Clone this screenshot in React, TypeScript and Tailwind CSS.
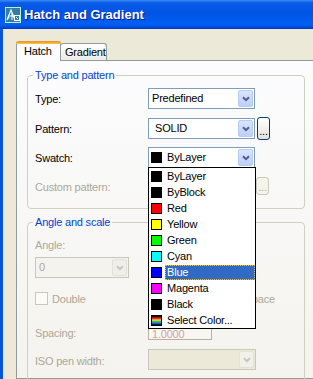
import React from 'react';

const FONT = "font-['Liberation_Sans',Arial,sans-serif]";

// little "v" arrow of an XP combo box
const Chevron = ({ color }: { color: string }) => (
  <svg width="8" height="6" viewBox="0 0 8 6" className="block">
    <path d="M1 1.2 L4 4.2 L7 1.2" fill="none" stroke={color} strokeWidth="2" />
  </svg>
);

const Combo = ({
  children,
  width,
  disabled = false,
}: {
  children?: React.ReactNode;
  width: string;
  disabled?: boolean;
}) => (
  <div
    className={`${width} h-[21px] shrink-0 flex items-center border ${
      disabled ? 'border-[#C9C7BA] bg-[#F4F3EE]' : 'border-[#7F9DB9] bg-white'
    }`}
  >
    <div className="flex-1 flex items-center min-w-0 overflow-hidden">{children}</div>
    <div
      className={`w-[15px] h-[17px] mr-[1px] flex items-center justify-center rounded-[2px] border ${
        disabled
          ? 'border-[#E3E1D8] bg-[#EFEEE8]'
          : 'border-[#B8CAF4] bg-[linear-gradient(to_bottom,#D9E4FE,#BCCFFA)]'
      }`}
    >
      <Chevron color={disabled ? '#C9C7BA' : '#4D6185'} />
    </div>
  </div>
);

const Swatch = ({ color }: { color: string }) => (
  <span className="w-[11px] h-[11px] border border-black shrink-0" style={{ background: color }} />
);

const HatchIcon = () => (
  <svg width="16" height="16" viewBox="0 0 16 16" className="block">
    <rect x="0.5" y="0.5" width="15" height="15" fill="#2F7FA6" stroke="#BFF0C8" />
    <path d="M2 13 L6 3 L10 13" fill="none" stroke="#fff" strokeWidth="1.2" />
    <path d="M3.6 9 H8.4 M7 6 V13 M4.5 11 H2.5" fill="none" stroke="#fff" strokeWidth="1" />
    <rect x="9.5" y="8.5" width="5" height="5" fill="#2F7FA6" stroke="#fff" />
    <path d="M11 10 L13 12" stroke="#fff" strokeWidth="1" />
  </svg>
);

const colors: { name: string; color: string }[] = [
  { name: 'ByLayer', color: '#000000' },
  { name: 'ByBlock', color: '#000000' },
  { name: 'Red', color: '#FF0000' },
  { name: 'Yellow', color: '#FFFF00' },
  { name: 'Green', color: '#00FF00' },
  { name: 'Cyan', color: '#00FFFF' },
  { name: 'Blue', color: '#0000FF' },
  { name: 'Magenta', color: '#FF00FF' },
  { name: 'Black', color: '#000000' },
  {
    name: 'Select Color...',
    color:
      'linear-gradient(to bottom, #000 0%, #ff3030 30%, #ffe030 45%, #30d040 60%, #3060ff 80%, #000 100%)',
  },
];

export default function App() {
  return (
    <div
      className={`relative w-[313px] h-[379px] overflow-hidden flex flex-col bg-[#ECE9D8] text-[11px] tracking-[-0.2px] text-black ${FONT}`}
    >
      {/* title bar */}
      <div className="h-[29px] shrink-0 flex items-center pl-[5px] gap-[3px] bg-[linear-gradient(to_bottom,#3A8CF6_0%,#0A5AE8_10%,#0054E3_45%,#0060F5_85%,#0048D8_95%,#0036B8_100%)]">
        <HatchIcon />
        <span className="text-white font-bold text-[13px] tracking-normal [text-shadow:1px_1px_#0A1883]">
          Hatch and Gradient
        </span>
      </div>

      <div className="flex-1 min-h-0 flex flex-col border-l-[3px] border-[#0855DD] pl-[13px] pt-[12px]">
        {/* tabs */}
        <div className="shrink-0 flex items-end h-[19px]">
          <div className="relative z-10 -mb-px w-[45px] h-[20px] flex flex-col border-x border-[#919B9C] bg-[#FCFCFE] rounded-t-[3px]">
            <div className="h-[3px] -mx-px rounded-t-[3px] bg-[linear-gradient(to_bottom,#E68B2C,#FFC73C)]" />
            <span className="pl-[7px] pt-[1px] leading-[13px]">Hatch</span>
          </div>
          <div className="w-[47px] h-[17px] -ml-px border border-b-0 border-[#919B9C] rounded-t-[3px] bg-[linear-gradient(to_bottom,#FFFFFF,#ECEBE6)] pl-[4px] pt-[2px] leading-[13px]">
            Gradient
          </div>
        </div>

        {/* tab page */}
        <div className="flex-1 min-h-0 w-[300px] border border-[#919B9C] bg-[linear-gradient(to_bottom,#FCFCFE,#F4F3EE)] pl-[10px]">
          <fieldset className="mt-[8px] w-[278px] border border-[#D0D0BF] rounded-[4px] pl-[7px] pb-[13px]">
            <legend className="-ml-[2px] px-[2px] leading-[13px] text-[#0046D5]">Type and pattern</legend>
            <div className="mt-[6px] h-[21px] flex items-center">
              <span className="w-[113px] pt-[2px]">Type:</span>
              <Combo width="w-[107px]">
                <span className="pl-[3px]">Predefined</span>
              </Combo>
            </div>
            <div className="mt-[9px] h-[21px] flex items-center">
              <span className="w-[113px] pt-[2px]">Pattern:</span>
              <Combo width="w-[107px]">
                <span className="pl-[6px]">SOLID</span>
              </Combo>
              <div className="ml-[2px] w-[13px] h-[23px] border border-[#003C74] rounded-[3px] bg-[linear-gradient(to_bottom,#FFFFFF,#E3E2DA)] flex items-end justify-center leading-[12px] pb-[2px]">
                ...
              </div>
            </div>
            <div className="mt-[8px] h-[21px] flex items-center">
              <span className="w-[113px] pt-[2px]">Swatch:</span>
              <Combo width="w-[107px]">
                <span className="pl-[2px] flex items-center gap-[5px]">
                  <Swatch color="#000" />
                  ByLayer
                </span>
              </Combo>
            </div>
            <div className="mt-[9px] h-[18px] flex items-center">
              <span className="w-[221px] pt-[3px] text-[#ACA899]">Custom pattern:</span>
              <div className="w-[13px] h-[18px] border border-[#CAC8BB] rounded-[3px] bg-[#F5F4EA] flex items-end justify-center leading-[12px] pb-[1px] text-[#ACA899]">
                ...
              </div>
            </div>
          </fieldset>

          <fieldset className="mt-[7px] w-[278px] border border-[#D0D0BF] rounded-[4px] pl-[7px] pb-[20px] text-[#ACA899]">
            <legend className="-ml-[2px] px-[2px] leading-[13px] text-[#0046D5]">Angle and scale</legend>
            <div className="mt-[10px] h-[13px] leading-[13px]">Angle:</div>
            <div className="mt-[5px] h-[21px] flex">
              <Combo width="w-[94px]" disabled>
                <span className="pl-[3px]">0</span>
              </Combo>
            </div>
            <div className="mt-[14px] h-[13px] flex items-center">
              <div className="w-[113px] flex items-center gap-[4px]">
                <span className="w-[13px] h-[13px] border border-[#CAC8BB] bg-[#FBFBF8]" />
                <span className="pt-[1px]">Double</span>
              </div>
              <div className="flex items-center gap-[3px]">
                <span className="w-[13px] h-[13px] border border-[#CAC8BB] bg-[#FBFBF8]" />
                <span className="pt-[1px]">Relative to paper space</span>
              </div>
            </div>
            <div className="mt-[17px] h-[18px] flex items-center">
              <span className="w-[113px] pt-[4px]">Spacing:</span>
              <div className="w-[64px] h-[18px] border border-[#B5B2A5] bg-[#F7F6F1] pl-[3px] pt-[3px] leading-[16px] text-[#D8A0A0] overflow-hidden">1.0000</div>
            </div>
            <div className="mt-[9px] h-[21px] flex items-center">
              <span className="w-[113px] pt-[4px]">ISO pen width:</span>
              <div className="w-[108px] h-[21px] flex items-center border border-[#C9C7BA] bg-[#ECE9D8]">
                <div className="flex-1" />
                <div className="w-[15px] h-[17px] mr-[1px] flex items-center justify-center rounded-[2px] border border-[#E3E1D8] bg-[#F1F0EA]">
                  <Chevron color="#C9C7BA" />
                </div>
              </div>
            </div>
          </fieldset>
        </div>
      </div>

      {/* open color drop-down list */}
      <div className="absolute left-[148px] top-[167px] w-[108px] border border-black bg-white flex flex-col">
        {colors.map((c) => (
          <div key={c.name} className="h-[16px] flex items-center pl-[2px]">
            <Swatch color={c.color} />
            <span
              className={`ml-[3px] flex-1 h-[15px] leading-[13px] pl-[1px] border ${
                c.name === 'Blue'
                  ? 'bg-[#316AC5] text-white border-dotted border-[#E0C860]'
                  : 'border-transparent'
              }`}
            >
              {c.name}
            </span>
          </div>
        ))}
      </div>
    </div>
  );
}
